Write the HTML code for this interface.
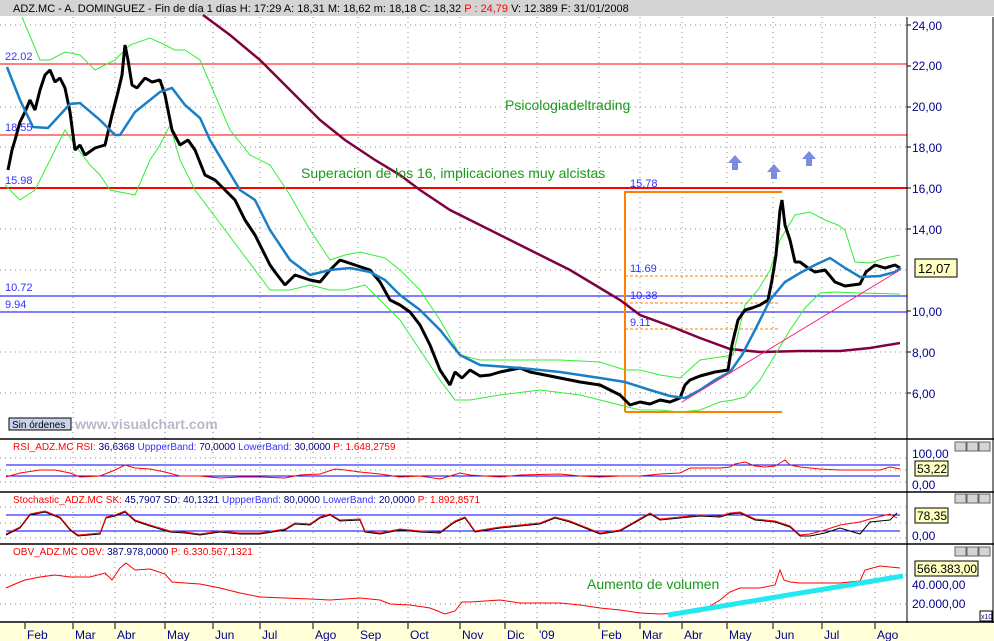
<!DOCTYPE html>
<html><head><meta charset="utf-8"><style>
html,body{margin:0;padding:0;background:#fff;width:994px;height:641px;overflow:hidden}
svg{display:block;font-family:"Liberation Sans",Arial,sans-serif}
</style></head><body>
<svg width="994" height="641" viewBox="0 0 994 641" xmlns="http://www.w3.org/2000/svg">
<rect x="0" y="0" width="994" height="641" fill="#fff"/>
<!-- header -->
<rect x="0" y="0" width="994" height="16" fill="#d4d4d4"/>
<text x="13" y="12" font-size="11" fill="#000">ADZ.MC - A. DOMINGUEZ - Fin de día 1 días  H: 17:29  A: 18,31  M: 18,62  m: 18,18  C: 18,32  <tspan fill="#f00">P : 24,79</tspan>  V: 12.389  F: 31/01/2008</text>
<!-- vertical grid dotted -->
<g stroke="#888" stroke-width="1" stroke-dasharray="1,4">
<path d="M73 17V620M115 17V620M165 17V620M213 17V620M260 17V620M313 17V620M358 17V620M408 17V620M460 17V620M505 17V620M537 17V620M599 17V620M640 17V620M682 17V620M727 17V620M773 17V620M822 17V620M875 17V620"/>
<path d="M0 25H907M0 107H907M0 147H907M0 229H907M0 270H907M0 352H907M0 393H907M0 458H907M0 470H907M0 482H907M0 507H907M0 523H907M0 538H907M0 575H907M0 604H907"/>
</g>
<!-- horizontal lines -->
<line x1="0" y1="64" x2="907" y2="64" stroke="#f00" stroke-width="1"/>
<line x1="0" y1="135" x2="907" y2="135" stroke="#f00" stroke-width="1"/>
<line x1="0" y1="188" x2="907" y2="188" stroke="#f00" stroke-width="2"/>
<line x1="0" y1="296" x2="907" y2="296" stroke="#00f" stroke-width="1"/>
<line x1="0" y1="312" x2="907" y2="312" stroke="#00f" stroke-width="1"/>
<g font-size="11" fill="#33f">
<text x="5" y="60">22.02</text><text x="5" y="131">18.55</text><text x="5" y="184">15.98</text>
<text x="5" y="291">10.72</text><text x="5" y="308">9.94</text>
<text x="630" y="187">15.78</text><text x="630" y="272">11.69</text><text x="630" y="299">10.38</text><text x="630" y="326">9.11</text>
</g>
<!-- orange box -->
<path d="M625 412V192H782M625 412H782" fill="none" stroke="#ff8000" stroke-width="2"/>
<g stroke="#ff8000" stroke-dasharray="3,2"><path d="M625 276H780M625 303H780M625 329H780"/></g>
<!-- maroon MA -->
<polyline fill="none" stroke="#800040" stroke-width="2.5" points="203,15 230,35 260,60 290,90 320,120 345,140 375,160 400,175 420,190 450,210 480,225 510,240 540,255 570,270 600,288 620,300 640,315 670,326 700,338 730,349 760,352 800,351 840,351 870,348 900,343"/>
<!-- green bands -->
<polyline fill="none" stroke="#33ee33" stroke-width="1" points="22,17 40,60 50,60 65,52 80,55 95,70 115,60 130,45 150,38 165,45 175,50 185,50 200,60 215,95 230,130 250,155 270,165 290,195 310,230 330,260 345,255 360,252 385,258 400,270 420,290 440,320 460,355 480,360 520,360 560,360 600,362 625,370 640,370 660,375 680,378 700,360 720,357 733,355 745,305 758,290 770,270 780,240 795,215 810,212 825,220 838,225 845,230 855,262 870,263 885,258 900,255"/>
<polyline fill="none" stroke="#33ee33" stroke-width="1" points="5,185 20,200 35,190 50,160 65,130 75,145 90,165 100,175 110,190 135,195 150,160 160,145 170,125 180,160 195,190 210,210 225,230 240,250 255,270 270,290 290,290 310,285 330,290 345,290 365,285 380,300 400,320 420,350 440,380 455,400 470,400 500,395 540,390 580,395 620,405 640,410 660,410 680,412 700,410 720,402 733,400 745,397 760,380 775,355 790,330 805,308 820,293 835,292 860,293 900,294"/>
<!-- price -->
<polyline fill="none" stroke="#000" stroke-width="3" stroke-linejoin="bevel" points="8,170 12,150 15,140 20,122 25,112 30,100 35,110 40,90 45,75 50,70 55,82 60,78 65,88 70,112 75,150 80,145 85,155 95,148 105,145 112,115 118,92 122,75 125,45 128,60 132,85 137,88 145,78 152,82 160,80 165,95 172,130 180,145 188,140 195,150 205,175 215,180 225,190 235,200 245,220 255,235 265,255 270,265 275,272 285,285 295,275 310,280 320,282 330,270 340,260 355,265 370,270 380,282 390,300 400,305 410,312 420,325 430,345 440,370 450,385 455,372 462,378 470,370 480,376 490,375 500,372 510,370 520,368 530,372 545,375 560,378 580,382 600,385 620,395 630,405 640,402 650,404 660,400 670,402 680,398 685,385 690,380 700,376 715,372 728,370 732,345 738,320 745,310 752,308 760,305 768,300 772,280 776,255 780,210 782,200 785,225 790,240 795,262 800,262 808,268 815,272 825,270 835,282 845,286 860,284 866,272 875,265 885,268 895,265 900,268"/>
<!-- blue MA -->
<polyline fill="none" stroke="#1a7fc4" stroke-width="2.5" points="7,67 20,100 33,127 48,128 70,104 80,103 100,120 115,135 120,135 135,112 160,92 172,88 185,105 200,118 210,140 225,165 240,190 255,200 270,230 290,260 310,275 330,270 350,268 370,272 385,280 400,295 420,310 440,330 460,355 480,365 520,368 560,372 600,378 625,382 650,390 670,396 685,398 700,390 715,380 730,372 742,355 755,330 770,300 785,282 800,273 815,265 830,258 845,268 860,277 880,276 895,272 901,268"/>
<line x1="682" y1="402" x2="900" y2="270" stroke="#ff2080" stroke-width="1"/>
<!-- texts -->
<text x="505" y="110" font-size="14" fill="#1a9a1a">Psicologiadeltrading</text>
<text x="301" y="178" font-size="14" fill="#1a9a1a">Superacion de los 16, implicaciones muy alcistas</text>
<!-- arrows -->
<g fill="#7b8ce0">
<path d="M735 155l-7 8h4v7h6v-7h4z"/><path d="M774 164l-7 8h4v7h6v-7h4z"/><path d="M809 151l-7 8h4v7h6v-7h4z"/>
</g>
<rect x="9" y="418" width="62" height="12" fill="#c8d4ec" stroke="#000"/>
<text x="12" y="428" font-size="10" fill="#000">Sin órdenes</text>
<text x="75" y="429" font-size="14" font-weight="bold" fill="#b8b8c8">www.visualchart.com</text>
<!-- right axis -->
<line x1="907" y1="17" x2="907" y2="623" stroke="#000"/>
<line x1="993" y1="17" x2="993" y2="623" stroke="#000"/>
<g font-size="12" fill="#00008b">
<text x="912" y="30">24,00</text><text x="912" y="70">22,00</text><text x="912" y="111">20,00</text><text x="912" y="152">18,00</text><text x="912" y="193">16,00</text><text x="912" y="234">14,00</text><text x="912" y="316">10,00</text><text x="912" y="357">8,00</text><text x="912" y="398">6,00</text>
</g>
<g stroke="#000"><path d="M907 25h4M907 66h4M907 107h4M907 147h4M907 188h4M907 229h4M907 311h4M907 352h4M907 393h4"/></g>
<rect x="915" y="259" width="42" height="18" fill="#ffffc0" stroke="#000"/>
<text x="918" y="273" font-size="13" fill="#000">12,07</text>
<!-- panel separators -->
<g stroke="#000" stroke-width="1.5"><path d="M0 439H994M0 492H994M0 544H994M0 622H994"/></g>
<!-- window buttons -->
<g fill="#d4d4d4" stroke="#666" font-size="9">
<rect x="955" y="442" width="11" height="9"/><rect x="967" y="442" width="11" height="9"/><rect x="979" y="442" width="11" height="9"/>
<rect x="955" y="494" width="11" height="9"/><rect x="967" y="494" width="11" height="9"/><rect x="979" y="494" width="11" height="9"/>
<rect x="955" y="547" width="11" height="9"/><rect x="967" y="547" width="11" height="9"/><rect x="979" y="547" width="11" height="9"/>
</g>
<!-- RSI -->
<text x="13" y="450" font-size="10" fill="#f00">RSI_ADZ.MC  RSI: <tspan fill="#000080">36,6368</tspan>  <tspan fill="#33f">UppperBand:</tspan> <tspan fill="#000080">70,0000</tspan>  <tspan fill="#33f">LowerBand:</tspan> <tspan fill="#000080">30,0000</tspan>  P: 1.648,2759</text>
<path d="M6 465H900M6 476H900" stroke="#00f"/>
<polyline fill="none" stroke="#f00" points="6,477 20,473 40,470 55,470 70,473 80,477 100,476 115,470 125,465 135,468 150,469 165,472 180,476 200,476 220,478 240,477 260,477 285,478 300,475 320,474 335,469 345,470 360,472 380,474 400,477 420,476 440,479 460,473 470,475 500,477 520,475 560,474 580,476 600,477 620,476 640,476 660,474 680,473 690,468 700,468 720,468 730,467 735,464 745,462 755,466 765,467 775,466 780,463 785,460 790,465 800,467 820,469 840,470 860,470 880,470 890,467 900,469"/>
<g font-size="12" fill="#00008b"><text x="912" y="458">100,00</text><text x="912" y="489">0,00</text></g>
<rect x="915" y="461" width="33" height="15" fill="#ffffc0" stroke="#000"/>
<text x="917" y="473" font-size="12" fill="#000">53,22</text>
<!-- Stoch -->
<text x="13" y="503" font-size="10" fill="#f00">Stochastic_ADZ.MC  SK: <tspan fill="#000080">45,7907</tspan>  <tspan fill="#000080">SD: 40,1321</tspan>  <tspan fill="#33f">UppperBand:</tspan> <tspan fill="#000080">80,0000</tspan>  <tspan fill="#33f">LowerBand:</tspan> <tspan fill="#000080">20,0000</tspan>  P: 1.892,8571</text>
<path d="M6 515H900M6 531H900" stroke="#00f"/>
<polyline fill="none" stroke="#000" points="6,535 20,528 30,515 45,512 60,518 70,530 78,536 100,534 106,518 115,516 125,512 135,521 150,526 170,532 185,533 200,535 220,532 240,534 260,534 285,530 295,524 310,525 320,518 330,515 340,521 360,520 365,532 380,534 400,530 420,532 440,533 455,522 465,518 475,532 500,528 520,526 540,524 555,518 570,522 585,528 600,534 620,531 650,514 660,520 680,518 700,516 720,517 730,514 740,513 755,520 775,522 790,527 800,536 810,536 825,533 840,528 860,534 870,522 890,520 897,513"/>
<polyline fill="none" stroke="#f00" points="6,534 20,527 30,514 45,511 60,517 70,529 78,535 100,533 106,517 115,515 125,511 135,520 150,525 170,531 185,532 200,534 220,531 240,533 260,533 285,529 295,523 310,524 320,517 330,514 340,520 360,519 365,531 380,533 400,529 420,531 440,532 455,521 465,517 475,531 500,527 520,525 540,523 555,517 570,521 585,527 600,533 620,530 650,513 660,519 680,517 700,515 720,516 730,513 740,512 755,519 775,521 790,526 800,535 810,534 825,530 840,525 860,522 870,519 890,514 897,518"/>
<g font-size="12" fill="#00008b"><text x="912" y="540">0,00</text></g>
<rect x="915" y="508" width="33" height="15" fill="#ffffc0" stroke="#000"/>
<text x="917" y="520" font-size="12" fill="#000">78,35</text>
<!-- OBV -->
<text x="13" y="555" font-size="10" fill="#f00">OBV_ADZ.MC  OBV: <tspan fill="#000080">387.978,0000</tspan>  P: 6.330.567,1321</text>
<polyline fill="none" stroke="#f00" points="6,588 15,584 25,580 40,577 55,575 70,577 90,577 105,573 112,580 120,568 126,563 135,570 150,569 165,574 172,582 185,583 200,584 220,588 240,593 260,597 285,598 310,599 330,600 360,598 380,600 390,604 410,605 430,608 445,614 455,611 462,602 470,602 500,600 520,603 560,603 580,605 600,608 620,610 640,613 660,614 680,613 700,612 710,606 720,600 730,592 740,588 760,588 775,585 780,570 784,580 790,582 800,583 820,583 840,583 860,581 865,570 880,566 900,568"/>
<line x1="668" y1="615" x2="903" y2="576" stroke="#22e8f0" stroke-width="5"/>
<text x="587" y="589" font-size="14" fill="#1a9a1a">Aumento de volumen</text>
<g font-size="12" fill="#00008b"><text x="912" y="589">40.000,00</text><text x="912" y="608">20.000,00</text></g>
<rect x="915" y="561" width="63" height="15" fill="#ffffc0" stroke="#000"/>
<text x="917" y="573" font-size="12" fill="#000">566.383,00</text>
<rect x="980" y="611" width="12" height="10" fill="#fff" stroke="#000"/>
<text x="981" y="619" font-size="7" fill="#00008b">x10</text>
<!-- month strip -->
<rect x="0" y="623" width="994" height="18" fill="#ffffd8"/>
<g stroke="#000"><path d="M25 623v6M73 623v6M115 623v6M165 623v6M213 623v6M260 623v6M313 623v6M358 623v6M408 623v6M460 623v6M505 623v6M537 623v6M599 623v6M640 623v6M682 623v6M727 623v6M773 623v6M822 623v6M875 623v6"/></g>
<g font-size="12" fill="#00008b">
<text x="27" y="639">Feb</text><text x="75" y="639">Mar</text><text x="117" y="639">Abr</text><text x="167" y="639">May</text><text x="215" y="639">Jun</text><text x="262" y="639">Jul</text><text x="315" y="639">Ago</text><text x="360" y="639">Sep</text><text x="410" y="639">Oct</text><text x="462" y="639">Nov</text><text x="507" y="639">Dic</text><text x="539" y="639">'09</text><text x="601" y="639">Feb</text><text x="642" y="639">Mar</text><text x="684" y="639">Abr</text><text x="729" y="639">May</text><text x="775" y="639">Jun</text><text x="824" y="639">Jul</text><text x="877" y="639">Ago</text>
</g>
</svg>
</body></html>
